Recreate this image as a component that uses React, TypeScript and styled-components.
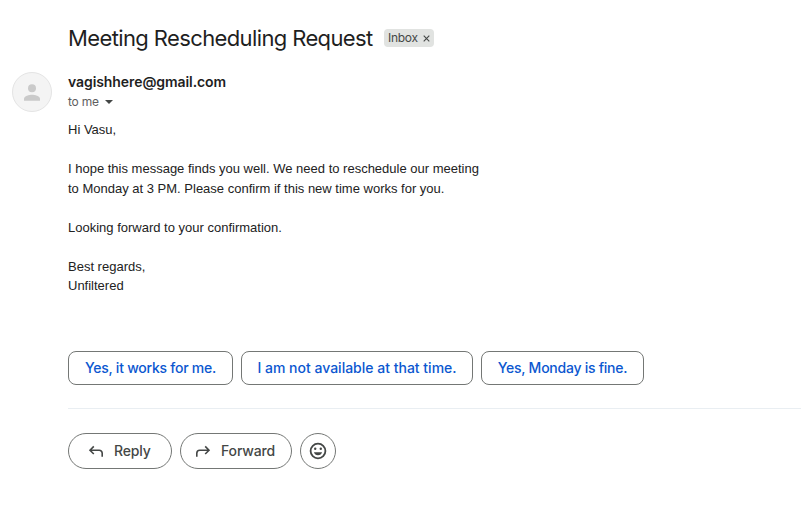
import React from "react";
import styled, { createGlobalStyle } from "styled-components";

const GlobalStyle = createGlobalStyle`
  * { box-sizing: border-box; }
  body { margin: 0; background: #fff; overflow: hidden; }
  button { font: inherit; background: none; margin: 0; cursor: pointer; }
`;

const Page = styled.main`
  width: 801px;
  height: 517px;
  padding-top: 22px;
  background: #fff;
  font-family: Inter, "Open Sans", sans-serif;
  color: #1f1f1f;
`;

const SubjectRow = styled.header`
  display: flex;
  align-items: center;
  height: 32px;
  padding-left: 68px;
`;

const Subject = styled.h1`
  width: 316px;
  margin: 0;
  font-size: 22px;
  font-weight: 400;
  line-height: 31px;
  letter-spacing: -0.62px;
  white-space: nowrap;
`;

const Label = styled.span`
  display: flex;
  align-items: center;
  width: 50px;
  height: 18px;
  padding-left: 4px;
  border-radius: 4px;
  background: #e1e3e1;
  color: #444746;
  font-size: 12px;
  letter-spacing: -0.3px;
  line-height: 18px;
  svg { margin: 1px 0 0 5px; }
`;

const Message = styled.article`
  display: grid;
  grid-template-columns: 68px 1fr;
  padding-top: 18px;
`;

const Avatar = styled.div`
  width: 40px;
  height: 40px;
  margin-left: 12px;
  border: 1px solid #e4e4e4;
  border-radius: 50%;
  background: #f4f4f4;
`;

const Sender = styled.div`
  font-size: 14px;
  font-weight: 600;
  line-height: 20px;
  letter-spacing: -0.08px;
`;

const Recipient = styled.div`
  display: flex;
  align-items: center;
  height: 20px;
  color: #5e5e5e;
  font-size: 12px;
  line-height: 20px;
  letter-spacing: -0.2px;
  svg { margin-left: 6px; }
`;

const Body = styled.div`
  padding-top: 8px;
  color: #222;
  font: 13px/19.5px "Liberation Sans", Arial, sans-serif;
  white-space: pre-line;
`;

const Suggestions = styled.div`
  display: flex;
  gap: 8px;
  padding-top: 55px;
`;

const Suggestion = styled.button<{ $width: number; $tracking: number }>`
  width: ${({ $width }) => $width}px;
  height: 34px;
  padding: 0;
  border: 1px solid #747775;
  border-radius: 8px;
  color: #0b57d0;
  && { font-size: 14px; font-weight: 500; letter-spacing: ${({ $tracking }) => $tracking}px; }
  white-space: nowrap;
`;

const Divider = styled.hr`
  height: 1px;
  margin: 23px 0 24px;
  border: 0;
  background: #e9eef2;
`;

const Actions = styled.footer`
  display: flex;
  gap: 8px;
`;

const Action = styled.button<{ $width: number; $pad: number }>`
  display: flex;
  align-items: center;
  gap: 8px;
  width: ${({ $width }) => $width}px;
  height: 36px;
  padding: 0 0 0 ${({ $pad }) => $pad}px;
  border: 1px solid #747775;
  border-radius: 18px;
  color: #444746;
  && { font-size: 14px; font-weight: 500; letter-spacing: -0.15px; }
`;

const suggestions = [
  { text: "Yes, it works for me.", width: 165, tracking: -0.24 },
  { text: "I am not available at that time.", width: 232, tracking: 0 },
  { text: "Yes, Monday is fine.", width: 163, tracking: -0.25 },
];

const body = `Hi Vasu,

I hope this message finds you well. We need to reschedule our meeting
to Monday at 3 PM. Please confirm if this new time works for you.

Looking forward to your confirmation.

Best regards,
Unfiltered`;

export default function App() {
  return (
    <>
      <GlobalStyle />
      <Page>
        <SubjectRow>
          <Subject>Meeting Rescheduling Request</Subject>
          <Label>
            Inbox
            <svg width="7" height="7" viewBox="0 0 7 7" stroke="#444746" strokeWidth="1.1">
              <path d="M.7.7 6.3 6.3M6.3.7.7 6.3" />
            </svg>
          </Label>
        </SubjectRow>
        <Message>
          <Avatar>
            <svg width="38" height="38" viewBox="0 0 38 38" fill="#cacaca">
              <circle cx="19" cy="15.2" r="4" />
              <path d="M11 27.7v-2c0-2.7 5.3-4 8-4s8 1.3 8 4v2z" />
            </svg>
          </Avatar>
          <div>
            <Sender>vagishhere@gmail.com</Sender>
            <Recipient>
              to me
              <svg width="8" height="4" viewBox="0 0 8 4" fill="#444746"><path d="M0 0h8L4 4z" /></svg>
            </Recipient>
            <Body>{body}</Body>
            <Suggestions>
              {suggestions.map((s) => (
                <Suggestion key={s.text} $width={s.width} $tracking={s.tracking}>{s.text}</Suggestion>
              ))}
            </Suggestions>
            <Divider />
            <Actions>
              <Action $width={104} $pad={17}>
                <svg width="20" height="20" viewBox="0 0 20 20" fill="none" stroke="#444746" strokeWidth="1.6">
                  <path d="M7.8 5.4 4 9.2l3.8 3.8M4.2 9.2h9a3 3 0 0 1 3 3v3.5" />
                </svg>
                Reply
              </Action>
              <Action $width={112} $pad={12}>
                <svg width="20" height="20" viewBox="0 0 20 20" fill="none" stroke="#444746" strokeWidth="1.6">
                  <path d="m12.2 5.4 3.8 3.8-3.8 3.8M15.8 9.2h-9a3 3 0 0 0-3 3v3.5" />
                </svg>
                Forward
              </Action>
              <Action $width={36} $pad={7} aria-label="Add reaction">
                <svg width="20" height="20" viewBox="0 0 20 20" fill="#444746">
                  <circle cx="10" cy="10" r="7.4" fill="none" stroke="#444746" strokeWidth="1.8" />
                  <circle cx="7.2" cy="7.7" r="1.2" />
                  <circle cx="12.8" cy="7.7" r="1.2" />
                  <path d="M5.9 11.2h8.2a4.3 4.3 0 0 1-8.2 0z" />
                </svg>
              </Action>
            </Actions>
          </div>
        </Message>
      </Page>
    </>
  );
}
